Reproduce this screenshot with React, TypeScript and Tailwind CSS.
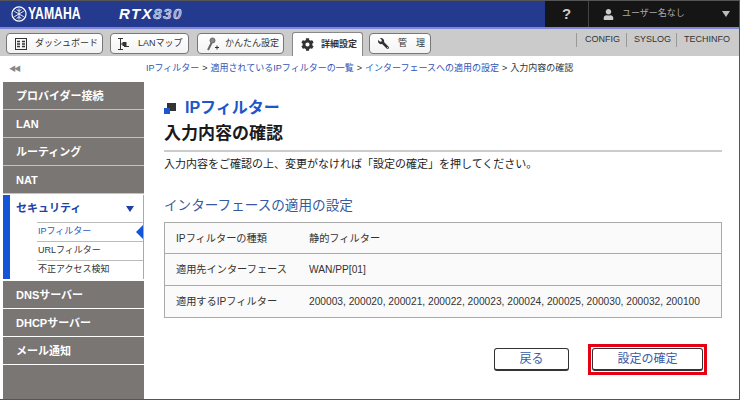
import type { ReactNode } from "react";
import { FaCog, FaWrench, FaUser } from "react-icons/fa";

const font = "font-['Liberation_Sans','Noto_Sans_CJK_JP',sans-serif]";

const ToolButton = ({ icon, label, className }: { icon: ReactNode; label: string; className: string }) => (
  <div className={`h-[21px] flex items-center whitespace-nowrap bg-gradient-to-b from-white to-[#f3f3f3] border border-[#777] rounded-[4px] text-[9px] text-[#333] ${className}`}>
    {icon}
    <span>{label}</span>
  </div>
);

const SideItem = ({ label, light }: { label: string; light?: boolean }) => (
  <div className={`h-[28px] pt-[1px] flex items-center pl-[13px] bg-[#7a7674] border-b text-white text-[11px] font-bold shrink-0 ${light ? "border-white" : "border-[#c4c2c0]"}`}>
    {label}
  </div>
);

const SubItem = ({ label, active }: { label: string; active?: boolean }) => (
  <div className={`relative h-[19px] flex items-center ml-[27px] border-t border-[#bbb] text-[9px] ${active ? "text-[#2f55b5]" : "text-[#333]"}`}>
    <span className="pl-[1px]">{label}</span>
    {active && (
      <span className="absolute right-0 top-[2px] w-0 h-0 border-y-[7px] border-y-transparent border-r-[7px] border-r-[#1454d8]" />
    )}
  </div>
);

const Row = ({ name, value }: { name: string; value: string }) => (
  <div className="h-[32px] first:h-[30px] pt-[1px] flex items-center border-t border-[#aaa] first:border-t-0 text-[10.2px] text-[#333]">
    <div className="w-[144px] pl-[11px] shrink-0">{name}</div>
    <div className="whitespace-nowrap">{value}</div>
  </div>
);

export default function App() {
  return (
    <div className={`w-[740px] h-[400px] overflow-hidden flex flex-col bg-white border-t border-r border-b border-[#555] ${font}`}>
      {/* header */}
      <div className="h-[26px] flex shrink-0 bg-[#233a8e] border-b-[2px] border-[#7f86d8] box-content">
        <div className="flex-1 flex items-center pl-[11px]">
          <svg width="16" height="16" viewBox="0 0 20 20" fill="none" stroke="white" strokeWidth="1.5">
            <circle cx="10" cy="10" r="8.8" />
            <path d="M10 3v14M4 6.5l12 7M16 6.5l-12 7M7 4.5l3 2 3-2M7 15.5l3-2 3 2" strokeWidth="1.1" />
          </svg>
          <span className="ml-[1px] w-[54px] text-white text-[17px] font-bold scale-x-[0.72] origin-left whitespace-nowrap">YAMAHA</span>
          <span className="ml-[37px] text-white text-[15px] font-bold italic tracking-[1.5px] whitespace-nowrap">
            RTX<span className="text-[#8f9ad0] [-webkit-text-stroke:0.4px_white]">830</span>
          </span>
        </div>
        <div className="w-[44px] bg-[#151515] border-r border-[#444] flex items-center justify-center text-[#ccc] text-[15px] font-bold">?</div>
        <div className="w-[150px] bg-[#151515] flex items-center pl-[14px] text-[#aaa] text-[9px]">
          <FaUser size={11} color="#ccc" />
          <span className="ml-[8px] flex-1">ユーザー名なし</span>
          <span className="mr-[9px] w-0 h-0 border-x-[4px] border-x-transparent border-t-[6px] border-t-[#bbb]" />
        </div>
      </div>

      {/* toolbar */}
      <div className="h-[27px] flex items-start shrink-0 bg-[#cbcbcb] pt-[4px] pl-[6px]">
        <ToolButton
          className="w-[97px] mr-[7px]"
          label="ダッシュボード"
          icon={
            <svg width="12" height="12" viewBox="0 0 12 12" className="ml-[8px] mr-[8px]" fill="none" stroke="#333">
              <rect x="0.5" y="0.5" width="11" height="11" />
              <path d="M2 3.5h3M7 3.5h3M2 6h3M7 6h3M2 8.5h3M7 8.5h3" strokeWidth="1.4" />
            </svg>
          }
        />
        <ToolButton
          className="w-[79px] mr-[8px]"
          label="LANマップ"
          icon={
            <svg width="11" height="14" viewBox="0 0 11 14" className="ml-[7px] mr-[9px]" fill="none" stroke="#333">
              <path d="M0 1.5h5M0 12.5h5M2.5 1.5v11M2.5 7h3M6 9.5h5" />
              <rect x="5" y="5.5" width="3" height="3" fill="#333" />
            </svg>
          }
        />
        <ToolButton
          className="w-[87px] mr-[8px]"
          label="かんたん設定"
          icon={
            <svg width="14" height="14" viewBox="0 0 14 14" className="ml-[8px] mr-[5px]" fill="none" stroke="#666">
              <circle cx="6.5" cy="3.5" r="2.5" fill="#888" />
              <path d="M5.5 6 2 13" strokeWidth="2" />
              <path d="M9 10.5h4M11 8.5v4" stroke="#333" />
            </svg>
          }
        />
        <div className="w-[71px] h-[24px] -mt-[1px] mr-[6px] flex items-center bg-white border border-b-0 border-[#888] rounded-t-[3px] text-[9px] font-bold text-[#333] whitespace-nowrap">
          <FaCog size={13} color="#333" className="ml-[8px] mr-[7px]" />
          詳細設定
        </div>
        <ToolButton
          className="w-[62px]"
          label="管　理"
          icon={<FaWrench size={11} color="#333" className="ml-[8px] mr-[9px] -scale-x-100" />}
        />
        <div className="ml-auto mt-[1px] flex items-center text-[9px] text-[#333] h-[12px]">
          <span className="border-l border-[#999] pl-[8px] pr-[6px]">CONFIG</span>
          <span className="border-l border-[#999] pl-[7px] pr-[5px]">SYSLOG</span>
          <span className="border-l border-[#999] pl-[7px] pr-[9px]">TECHINFO</span>
        </div>
      </div>

      <div className="flex-1 flex min-h-0">
        {/* sidebar */}
        <div className="w-[144px] shrink-0 pl-[3px] flex flex-col">
          <div className="h-[26px] flex items-center text-[7px] text-[#888] pl-[6px] tracking-[-2px] shrink-0">◀◀</div>
          <SideItem label="プロバイダー接続" />
          <SideItem label="LAN" />
          <SideItem label="ルーティング" />
          <SideItem label="NAT" />
          <div className="mt-[1px] mb-[2px] border-l-[7px] border-[#1454d8] border-r border-r-[#aaa] shrink-0">
            <div className="h-[27px] flex items-center justify-between pl-[6px] pr-[9px] text-[#1d3fa8] text-[11px] font-bold">
              セキュリティ
              <span className="w-0 h-0 border-x-[4px] border-x-transparent border-t-[6px] border-t-[#1d3fa8]" />
            </div>
            <SubItem label="IPフィルター" active />
            <SubItem label="URLフィルター" />
            <SubItem label="不正アクセス検知" />
          </div>
          <SideItem light label="DNSサーバー" />
          <SideItem light label="DHCPサーバー" />
          <SideItem light label="メール通知" />
          <div className="flex-1 bg-[#7a7674]" />
        </div>

        {/* main */}
        <div className="flex-1 min-w-0 flex flex-col">
          <div className="h-[26px] flex items-center pl-[2px] text-[9px] text-[#333] shrink-0">
            <span className="text-[#2f55b5]">IPフィルター</span>
            <span className="mx-[3px]">&gt;</span>
            <span className="text-[#2f55b5]">適用されているIPフィルターの一覧</span>
            <span className="mx-[3px]">&gt;</span>
            <span className="text-[#2f55b5]">インターフェースへの適用の設定</span>
            <span className="mx-[3px]">&gt;</span>
            <span>入力内容の確認</span>
          </div>
          <div className="pl-[20px] pr-[17px]">
            <div className="mt-[15px] h-[22px] flex items-center">
              <span className="relative w-[12px] h-[11px] mr-[9px]">
                <span className="absolute right-0 top-0 w-[9px] h-[8px] bg-[#333]" />
                <span className="absolute left-0 bottom-0 w-[6px] h-[6px] bg-[#1d56c8]" />
              </span>
              <span className="text-[#1d56c8] text-[16px] font-bold">IPフィルター</span>
            </div>
            <div className="h-[29px] flex items-center text-[17px] font-bold text-[#1a1a1a]">入力内容の確認</div>
            <div className="mt-[2px] h-[2px] bg-[#ccc]" />
            <div className="mt-[4px] text-[11px] text-[#222]">入力内容をご確認の上、変更がなければ「設定の確定」を押してください。</div>
            <div className="mt-[23px] text-[13.6px] text-[#355a9e]">インターフェースの適用の設定</div>
            <div className="mt-[6px] border border-[#aaa] bg-[#fafafa]">
              <Row name="IPフィルターの種類" value="静的フィルター" />
              <Row name="適用先インターフェース" value="WAN/PP[01]" />
              <Row name="適用するIPフィルター" value="200003, 200020, 200021, 200022, 200023, 200024, 200025, 200030, 200032, 200100" />
            </div>
            <div className="mt-[26px] flex justify-end items-center pr-[15px]">
              <div className="w-[75px] h-[23px] mr-[19px] flex items-center justify-center border border-[#333] rounded-[3px] border-b-2 text-[12px] text-[#3a5aa8]">戻る</div>
              <div className="border-[3px] border-[#e60012] p-[1px]">
                <div className="w-[111px] h-[23px] flex items-center justify-center border border-[#333] rounded-[3px] border-b-2 text-[12px] text-[#3a5aa8]">設定の確定</div>
              </div>
            </div>
          </div>
        </div>
      </div>
    </div>
  );
}
